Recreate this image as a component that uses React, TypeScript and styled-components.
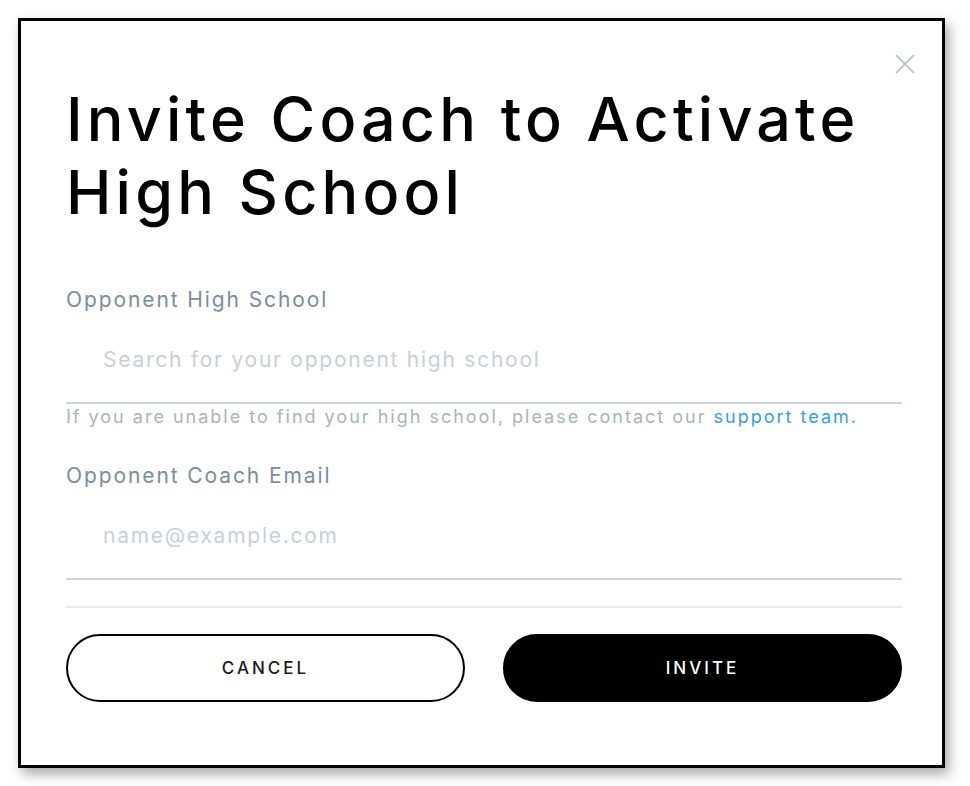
import React from "react";
import styled, { createGlobalStyle } from "styled-components";

const GlobalStyle = createGlobalStyle`
  html, body {
    margin: 0;
    padding: 0;
    background: #ffffff;
  }
  body {
    font-family: Inter, "Noto Sans", sans-serif;
  }
`;

const Page = styled.div`
  padding: 18px;
  width: 970px;
  height: 786px;
  box-sizing: border-box;
`;

const Modal = styled.div`
  position: relative;
  width: 927px;
  height: 750px;
  box-sizing: border-box;
  border: 3px solid #000;
  background: #fff;
  box-shadow: 4px 6px 12px rgba(0, 0, 0, 0.35);
  padding: 62px 40px 0 45px;
`;

const CloseButton = styled.button`
  position: absolute;
  top: 31px;
  right: 25px;
  width: 24px;
  height: 24px;
  padding: 0;
  border: none;
  background: transparent;
  cursor: pointer;
  display: flex;
  align-items: center;
  justify-content: center;
`;

const Title = styled.h1`
  margin: 0 0 58px;
  font-size: 61px;
  line-height: 73px;
  font-weight: 500;
  color: #000;
  letter-spacing: 4.2px;
`;

const Field = styled.div`
  display: flex;
  flex-direction: column;
`;

const Label = styled.label`
  font-size: 21px;
  line-height: 26px;
  color: #7a8d9c;
  font-weight: 400;
  letter-spacing: 1.9px;
`;

const Input = styled.input`
  border: none;
  border-bottom: 2px solid #cbd5dc;
  outline: none;
  margin-top: 34px;
  padding: 0 0 29px 37px;
  font-size: 21px;
  line-height: 26px;
  font-family: inherit;
  letter-spacing: 1.75px;
  color: #333;
  &::placeholder {
    color: #c5d0d8;
  }
`;

const Help = styled.p`
  margin: 1px 0 0;
  font-size: 18px;
  line-height: 24px;
  color: #a8b4bd;
  letter-spacing: 2px;
`;

const Link = styled.a`
  color: #3a9be8;
  text-decoration: none;
`;

const Divider = styled.div`
  height: 2px;
  background: #e8ecef;
  margin-top: 26px;
`;

const Actions = styled.div`
  display: grid;
  grid-template-columns: 1fr 1fr;
  gap: 38px;
  margin-top: 26px;
`;

const Button = styled.button<{ $primary?: boolean }>`
  height: 68px;
  border-radius: 34px;
  border: 2.5px solid #000;
  background: ${(p) => (p.$primary ? "#000" : "#fff")};
  color: ${(p) => (p.$primary ? "#fff" : "#1a1a1a")};
  font-family: inherit;
  font-size: 17px;
  font-weight: 500;
  letter-spacing: 3px;
  cursor: pointer;
`;

export default function App() {
  return (
    <>
      <GlobalStyle />
      <Page>
        <Modal>
          <CloseButton aria-label="Close">
            <svg width="20" height="20" viewBox="0 0 20 20">
              <path d="M1 1 L19 19 M19 1 L1 19" stroke="#b9c7d1" strokeWidth="1.8" />
            </svg>
          </CloseButton>
          <Title>
            Invite Coach to Activate
            <br />
            High School
          </Title>
          <Field>
            <Label>Opponent High School</Label>
            <Input placeholder="Search for your opponent high school" />
            <Help>
              If you are unable to find your high school, please contact our{" "}
              <Link href="#">support team.</Link>
            </Help>
          </Field>
          <Field style={{ marginTop: 34 }}>
            <Label>Opponent Coach Email</Label>
            <Input placeholder="name@example.com" />
          </Field>
          <Divider />
          <Actions>
            <Button>CANCEL</Button>
            <Button $primary>INVITE</Button>
          </Actions>
        </Modal>
      </Page>
    </>
  );
}
